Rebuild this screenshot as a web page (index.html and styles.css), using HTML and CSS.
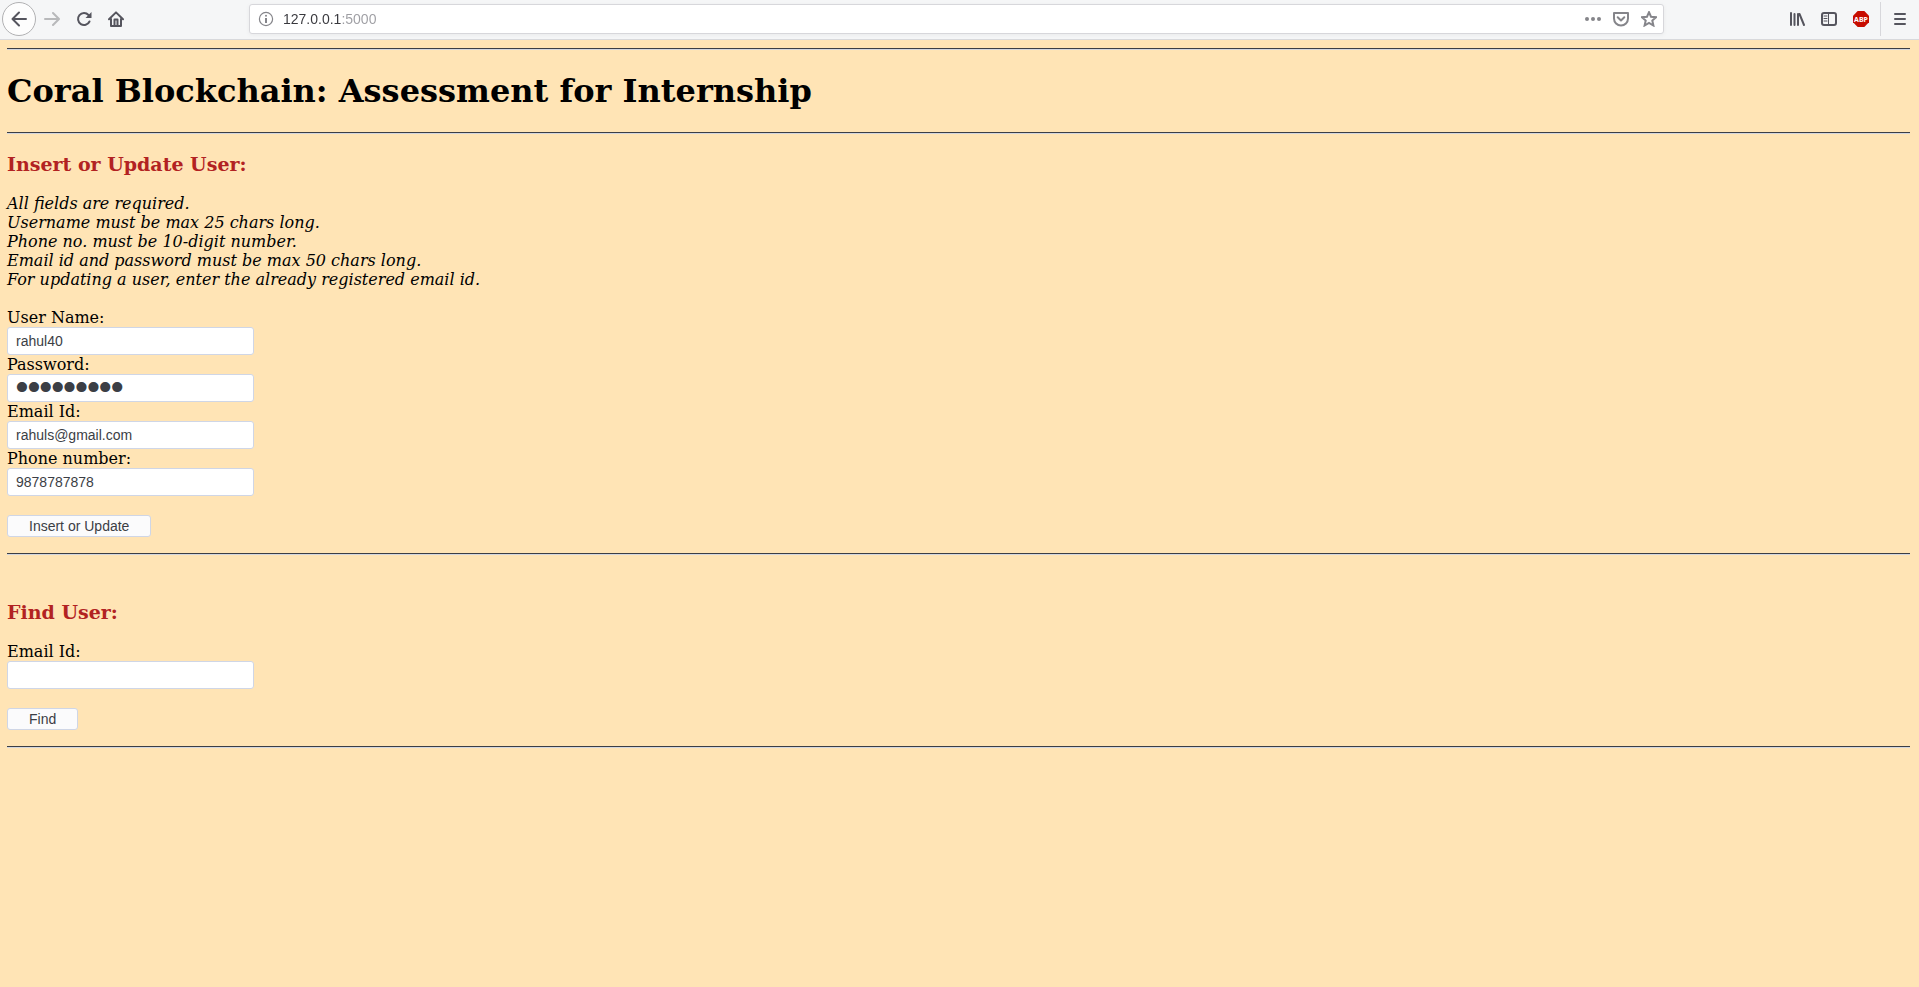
FILE: index.html
```html
<!DOCTYPE html>
<html lang="en">
<head>
<meta charset="utf-8">
<title>Coral Blockchain</title>
<link rel="stylesheet" href="styles.css">
</head>
<body>
<header class="toolbar">
  <button class="tool back" type="button" aria-label="Back"><svg width="16" height="16" viewBox="0 0 16 16"><path d="M8 1.500L1.500 8L8 14.500M2 8H15" class="line"/></svg></button>
  <button class="tool faded" type="button" aria-label="Forward"><svg width="16" height="16" viewBox="0 0 16 16"><path d="M9 2L15 8L9 14M14.500 8H1" class="line"/></svg></button>
  <button class="tool" type="button" aria-label="Reload"><svg width="16" height="16" viewBox="0 0 16 16"><path d="M13.500 10.500A6 6 0 1 1 12.500 4L14 5.500" class="line"/><path d="M15.500 1V7H9.500Z" class="solid"/></svg></button>
  <button class="tool" type="button" aria-label="Home"><svg width="16" height="16" viewBox="0 0 16 16"><path d="M1 8.200L8 1.400L15 8.200M3 8V15H13V8" class="line"/><path d="M6.500 14.500V8.500H9.500V14.500" class="line"/></svg></button>
  <div class="address">
    <svg class="info" width="16" height="16" viewBox="0 0 16 16"><circle cx="8" cy="8" r="6.600" fill="none" stroke="currentColor" stroke-width="1.200"/><circle cx="8" cy="4.800" r="1" class="solid"/><path d="M8 7V12" class="stem"/></svg>
    <input class="url" type="text" aria-label="Address" value="127.0.0.1:5000">
    <button class="action" type="button" aria-label="Page actions"><svg width="16" height="16" viewBox="0 0 16 16"><circle cx="2" cy="8" r="2" class="solid"/><circle cx="8" cy="8" r="2" class="solid"/><circle cx="14" cy="8" r="2" class="solid"/></svg></button>
    <button class="action" type="button" aria-label="Save to Pocket"><svg width="16" height="16" viewBox="0 0 16 16"><path d="M1 2H15V7.500A7 7 0 0 1 1 7.500Z" class="line"/><path d="M4.700 6.300L8 9.500L11.300 6.300" class="line"/></svg></button>
    <button class="action" type="button" aria-label="Bookmark"><svg width="16" height="16" viewBox="0 0 16 16"><path d="M8 1.200L10 5.700L15 6.200L11.300 9.500L12.400 14.500L8 12L3.600 14.500L4.700 9.500L1 6.200L6 5.700Z" class="line star"/></svg></button>
  </div>
  <button class="tool" type="button" aria-label="Library"><svg width="16" height="16" viewBox="0 0 16 16"><path d="M2 2V14M5.500 3V14M9 3V14M10.500 3L15 14" class="line"/></svg></button>
  <button class="tool" type="button" aria-label="Sidebars"><svg width="16" height="16" viewBox="0 0 16 16"><rect x="1" y="2" width="14" height="12" rx="2" class="line"/><path d="M7.500 2V14" class="line thin"/><path d="M3 5H6M3 7.500H6M3 10H6" class="line thin"/></svg></button>
  <button class="tool" type="button" aria-label="Adblock Plus"><svg width="16" height="16" viewBox="0 0 16 16"><path d="M4.700 0H11.300L16 4.700V11.300L11.300 16H4.700L0 11.300V4.700Z" fill="#c70d00"/><text x="8" y="11" class="abp">ABP</text></svg></button>
  <span class="divider"></span>
  <button class="tool" type="button" aria-label="Menu"><svg width="16" height="16" viewBox="0 0 16 16"><path d="M3 3H13M3 8H13M3 13H13" class="line"/></svg></button>
</header>
<main class="page">
  <hr>
  <h1>Coral Blockchain: Assessment for Internship</h1>
  <hr>
  <h3>Insert or Update User:</h3>
  <form class="form">
    <p class="rules">All fields are required.<br>Username must be max 25 chars long.<br>Phone no. must be 10-digit number.<br>Email id and password must be max 50 chars long.<br>For updating a user, enter the already registered email id.</p>
    <label for="name">User Name:</label>
    <input class="field" id="name" type="text" value="rahul40">
    <label for="password">Password:</label>
    <input class="field secret" id="password" type="password" value="rahul1234">
    <label for="email">Email Id:</label>
    <input class="field" id="email" type="email" value="rahuls@gmail.com">
    <label for="phone">Phone number:</label>
    <input class="field" id="phone" type="text" value="9878787878">
    <button class="submit" type="button">Insert or Update</button>
  </form>
  <hr>
  <h3 class="find">Find User:</h3>
  <form class="form">
    <label for="lookup">Email Id:</label>
    <input class="field" id="lookup" type="email">
    <button class="submit" type="button">Find</button>
  </form>
  <hr>
</main>
</body>
</html>
```
FILE: styles.css
```css
* { box-sizing: border-box; }
body {
  margin: 0;
  background: #ffe4b5;
  color: #000;
  font: 16px/19px "DejaVu Serif", serif;
}
button, input { font: 14px/18px "Liberation Sans", sans-serif; }
.toolbar {
  display: flex;
  align-items: center;
  height: 40px;
  padding: 0 3px 2px 2px;
  background: #f5f6f7;
  border-bottom: 1px solid #d8d9dc;
}
.tool, .action {
  display: grid;
  place-items: center;
  flex: none;
  width: 32px;
  height: 32px;
  padding: 0;
  border: 0;
  background: none;
  color: #55555e;
}
.back {
  width: 34px;
  height: 34px;
  border: 1px solid #b1b1b3;
  border-radius: 50%;
  background: #fdfdfd;
}
.faded { color: #b8b9bb; }
.line { fill: none; stroke: currentColor; stroke-width: 2; stroke-linejoin: round; stroke-linecap: round; }
.thin { stroke-width: 1; }
.stem { stroke: currentColor; stroke-width: 2; }
.solid { fill: currentColor; }
.abp { fill: #fff; font: bold 7px "Noto Sans", sans-serif; text-anchor: middle; }
.address {
  display: flex;
  align-items: center;
  flex: 1;
  height: 30px;
  margin: 0 117px;
  padding: 0 0 0 8px;
  border: 1px solid #d7d7db;
  border-radius: 3px;
  background: #fff;
  box-shadow: 0 1px 4px #0000000d;
  color: #85858a;
}
.info { flex: none; margin-right: 9px; }
.url {
  flex: 1;
  min-width: 0;
  padding: 0;
  border: 0;
  outline: 0;
  background: linear-gradient(90deg, #38383d 59px, #9d9da2 59px);
  background-clip: text;
  -webkit-background-clip: text;
  color: transparent;
}
.action { width: 28px; height: 28px; color: #85858a; }
.star { stroke-linejoin: miter; }
.divider { width: 1px; height: 34px; margin: 0 3px; background: #d7d7db; }
.page { padding: 8px 9px 8px 7px; }
hr {
  height: 2px;
  margin: 0;
  border: 0;
  border-top: 1px solid #3b3e45;
  background: #d3d6de;
}
h1 { margin: 22px 0; font-size: 32px; line-height: 38px; }
h3 { margin: 19px 0; font-size: 19px; line-height: 22px; color: #b22222; }
.find { margin: 46px 0 19px; }
.form { display: flex; flex-direction: column; align-items: flex-start; margin-bottom: 16px; }
.rules { margin: 0 0 19px; font-style: italic; }
.field {
  width: 247px;
  height: 28px;
  padding: 0 8px;
  border: 1px solid #cfd6e6;
  border-radius: 3px;
  background: #fff;
  color: #3b3e45;
}
.secret { font: 34px/26px "Liberation Serif", serif; -webkit-text-stroke: 2px #3b3e45; }
.submit {
  height: 22px;
  margin-top: 19px;
  padding: 0 21px;
  border: 1px solid #cfd6e6;
  border-radius: 3px;
  background: #fbfbfc;
  color: #3b3e45;
}
```
